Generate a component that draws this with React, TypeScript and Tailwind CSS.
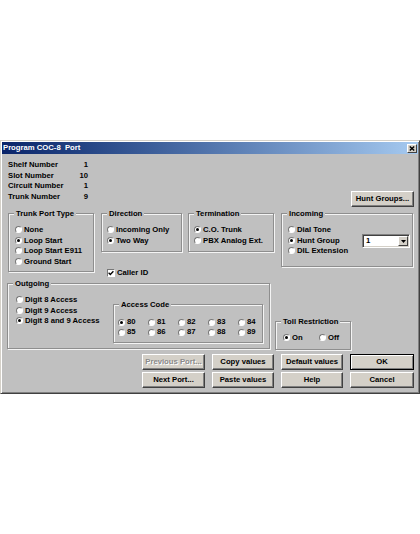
import type { ReactNode } from 'react';

const info = [
	['Shelf Number', '1'],
	['Slot Number', '10'],
	['Circuit Number', '1'],
	['Trunk Number', '9'],
];

function Radio({ label, checked = false }: { label?: string; checked?: boolean }) {
	return (
		<div className="flex items-center h-[10.6px] whitespace-nowrap">
			<span className="flex items-center justify-center w-[7px] h-[7px] shrink-0 rounded-full bg-white border border-t-[#777] border-l-[#777] border-r-white border-b-white">
				{checked && <span className="w-[3px] h-[3px] rounded-full bg-black" />}
			</span>
			{label && <span className="ml-[2px]">{label}</span>}
		</div>
	);
}

function Group({ title, className, children }: { title: string; className: string; children?: ReactNode }) {
	return (
		<div className={`relative shrink-0 border border-[#8e8e8e] shadow-[inset_1px_1px_0_#f4f4f4,1px_1px_0_#f4f4f4] ${className}`}>
			<span className="absolute top-[-5px] left-[5px] px-[2px] bg-[#c0c0c0] leading-[9px] whitespace-nowrap">{title}</span>
			{children}
		</div>
	);
}

function Btn({ children, disabled = false, primary = false, className = '' }: { children: ReactNode; disabled?: boolean; primary?: boolean; className?: string }) {
	const edge = primary
		? 'border-black shadow-[inset_1px_1px_0_#fff,inset_-1px_-1px_0_#808080]'
		: 'border-t-white border-l-white border-r-[#404040] border-b-[#404040] shadow-[inset_-1px_-1px_0_#808080]';
	return (
		<button
			className={`h-[16px] flex items-center justify-center bg-[#d4d0c8] border whitespace-nowrap ${edge} ${disabled ? 'text-[#8a8a8a] [text-shadow:1px_1px_0_#fff]' : 'text-black'} ${className}`}
		>
			{children}
		</button>
	);
}

export default function App() {
	return (
		<div className="min-h-[534px] bg-white pt-[140px] font-['Liberation_Sans',Arial,sans-serif] text-[7.7px] font-bold text-black">
			<div className="w-[420px] h-[254px] flex flex-col p-[1px] bg-[#c0c0c0] border border-t-[#d4d0c8] border-l-[#d4d0c8] border-r-[#404040] border-b-[#404040] shadow-[inset_1px_1px_0_#fff,inset_-1px_-1px_0_#808080]">
				{/* title bar */}
				<div className="h-[12px] flex items-center justify-between bg-linear-to-r from-[#0a246a] to-[#a6caf0] pl-[1px] pr-[1px]">
					<span className="text-white leading-none">Program COC-8&nbsp; Port</span>
					<span className="w-[10px] h-[9px] flex items-center justify-center bg-[#d4d0c8] border border-t-white border-l-white border-r-[#404040] border-b-[#404040]">
						<svg width="6" height="5" viewBox="0 0 6 5">
							<path d="M0.8 0.5L5.2 4.5M5.2 0.5L0.8 4.5" stroke="#000" strokeWidth="1.4" />
						</svg>
					</span>
				</div>

				{/* port info + hunt groups */}
				<div className="mt-[6px] h-[47px] flex justify-between items-end">
					<div className="ml-[6px] self-start leading-[10.6px]">
						{info.map(([l, v]) => (
							<div key={l} className="flex">
								<span className="w-[70px]">{l}</span>
								<span className="w-[10px] text-right">{v}</span>
							</div>
						))}
					</div>
					<Btn className="w-[63px] mr-[4px]">Hunt Groups...</Btn>
				</div>

				{/* first row of groups */}
				<div className="mt-[6px] ml-[6px] flex items-start">
					<Group title="Trunk Port Type" className="w-[86px] h-[59px] pt-[10.5px] pl-[6px]">
						<Radio label="None" />
						<Radio label="Loop Start" checked />
						<Radio label="Loop Start E911" />
						<Radio label="Ground Start" />
					</Group>
					<div className="ml-[7px] flex flex-col">
						<div className="flex items-start">
							<Group title="Direction" className="w-[81px] h-[39px] pt-[10.5px] pl-[5px]">
								<Radio label="Incoming Only" />
								<Radio label="Two Way" checked />
							</Group>
							<Group title="Termination" className="ml-[6px] w-[86px] h-[39px] pt-[10.5px] pl-[5px]">
								<Radio label="C.O. Trunk" checked />
								<Radio label="PBX Analog Ext." />
							</Group>
						</div>
						<div className="mt-[16px] ml-[6px] h-[9px] flex items-center">
							<span className="w-[8px] h-[8px] flex items-center justify-center bg-white border border-t-[#777] border-l-[#777] border-r-white border-b-white">
								<svg width="6" height="6" viewBox="0 0 6 6">
									<path d="M0.6 2.8L2.3 4.5L5.4 1.2" stroke="#000" strokeWidth="1.3" fill="none" />
								</svg>
							</span>
							<span className="ml-[2px]">Caller ID</span>
						</div>
					</div>
					<Group title="Incoming" className="ml-[7px] w-[132px] h-[54px] pt-[10.5px] pl-[6px] flex items-start">
						<div className="w-[74px]">
							<Radio label="Dial Tone" />
							<Radio label="Hunt Group" checked />
							<Radio label="DIL Extension" />
						</div>
						<div className="mt-[9.5px] w-[48px] h-[14px] flex items-center bg-white border border-t-[#808080] border-l-[#808080] border-r-white border-b-white shadow-[inset_1px_1px_0_#404040,inset_-1px_-1px_0_#d4d0c8] pl-[3px] pr-[1px]">
							<span className="flex-1">1</span>
							<span className="w-[10px] h-[10px] flex items-center justify-center bg-[#d4d0c8] border border-t-white border-l-white border-r-[#404040] border-b-[#404040]">
								<svg width="5" height="3" viewBox="0 0 5 3">
									<path d="M0 0H5L2.5 3Z" fill="#000" />
								</svg>
							</span>
						</div>
					</Group>
				</div>

				{/* outgoing + toll restriction */}
				<div className="mt-[6px] ml-[5px] flex items-start">
					<Group title="Outgoing" className="w-[263px] h-[66px] pt-[10.5px] pl-[8px] flex items-start">
						<div className="w-[97px]">
							<Radio label="Digit 8 Access" />
							<Radio label="Digit 9 Access" />
							<Radio label="Digit 8 and 9 Access" checked />
						</div>
						<Group title="Access Code" className="mt-[9.5px] w-[150px] h-[39px] pt-[12px] pl-[4px]">
							<div className="grid grid-cols-[30px_30px_30px_30px_30px] leading-[10px]">
								{['80', '81', '82', '83', '84', '85', '86', '87', '88', '89'].map((c) => (
									<div key={c} className="h-[10px] flex items-center">
										<Radio label={c} checked={c === '80'} />
									</div>
								))}
							</div>
						</Group>
					</Group>
					<Group title="Toll Restriction" className="ml-[5px] mt-[38px] w-[76px] h-[29px] pt-[10.5px] pl-[7px] flex">
						<div className="w-[36px]">
							<Radio label="On" checked />
						</div>
						<Radio label="Off" />
					</Group>
				</div>

				{/* buttons */}
				<div className="mt-[4px] mr-[4px] self-end grid grid-cols-[63px_62px_62px_64px] gap-x-[7px] gap-y-[2px]">
					<Btn disabled>Previous Port...</Btn>
					<Btn>Copy values</Btn>
					<Btn>Default values</Btn>
					<Btn primary>OK</Btn>
					<Btn>Next Port...</Btn>
					<Btn>Paste values</Btn>
					<Btn>Help</Btn>
					<Btn>Cancel</Btn>
				</div>
			</div>
		</div>
	);
}
